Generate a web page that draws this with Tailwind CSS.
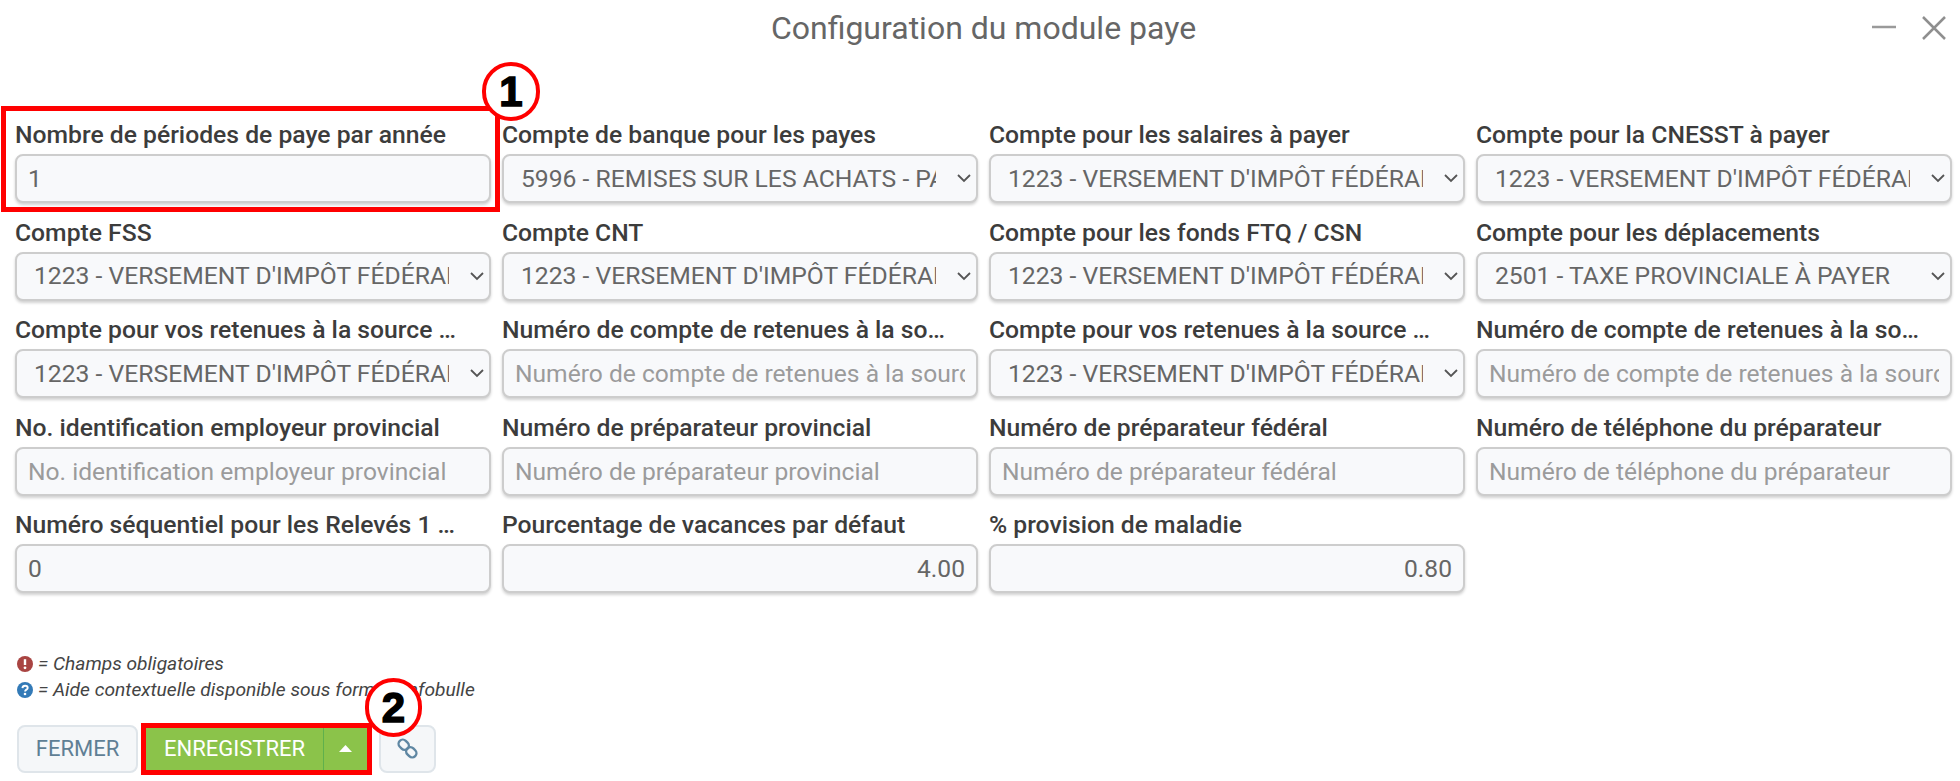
<!DOCTYPE html>
<html lang="fr">
<head>
    <meta charset="UTF-8">
    <title>Configuration du module paye</title>
    <script src="https://cdn.jsdelivr.net/npm/@tailwindcss/browser@4"></script>
</head>
<body class="bg-white font-['Roboto',sans-serif] text-[#3c3c3c]">
<div class="relative w-[1960px] h-[781px] overflow-hidden">
    <!-- header -->
    <div class="relative h-[56px] pl-[7px] flex justify-center items-center">
        <h1 class="text-[32px] text-[#666] leading-none">Configuration du module paye</h1>
        <svg class="absolute left-[1871px] top-[20px] w-[26px] h-[12px]" viewBox="0 0 26 12"><path d="M1 7H25" stroke="#9a9a9a" stroke-width="2.5"/></svg>
        <svg class="absolute left-[1921px] top-[15px] w-[26px] h-[26px]" viewBox="0 0 26 26"><path d="M2 2L24 24M24 2L2 24" stroke="#8f8f8f" stroke-width="2.5"/></svg>
    </div>

    <!-- fields -->
    <div class="grid grid-cols-[repeat(4,476px)] gap-x-[11px] auto-rows-[97.5px] pl-[15px] pt-[59px]">
        <div>
            <label class="block pr-[30px] text-[24.7px] font-medium leading-[39px] truncate">Nombre de périodes de paye par année</label>
            <input value="1" class="w-full h-[49px] px-[11px] text-[24.6px] text-[#666] bg-[#f8f9fb] border-2 border-[#cdcdcd] rounded-lg shadow-[0_2px_3px_rgba(0,0,0,0.18)]">
        </div>
        <div>
            <label class="block pr-[30px] text-[24.7px] font-medium leading-[39px] truncate">Compte de banque pour les payes</label>
            <div class="relative">
                <select class="w-full h-[49px] pl-[17px] pr-[40px] text-[24.7px] text-[#666] bg-[#f8f9fb] border-2 border-[#cdcdcd] rounded-lg shadow-[0_2px_3px_rgba(0,0,0,0.18)] appearance-none"><option>5996 - REMISES SUR LES ACHATS - PAIES</option></select>
                <svg class="absolute right-[6px] top-[19px] w-[16px] h-[10px]" viewBox="0 0 16 10"><path d="M2 2L8 8L14 2" fill="none" stroke="#555" stroke-width="1.8"/></svg>
            </div>
        </div>
        <div>
            <label class="block pr-[30px] text-[24.7px] font-medium leading-[39px] truncate">Compte pour les salaires à payer</label>
            <div class="relative">
                <select class="w-full h-[49px] pl-[17px] pr-[40px] text-[24.7px] text-[#666] bg-[#f8f9fb] border-2 border-[#cdcdcd] rounded-lg shadow-[0_2px_3px_rgba(0,0,0,0.18)] appearance-none"><option>1223 - VERSEMENT D'IMPÔT FÉDÉRAL À PAYER</option></select>
                <svg class="absolute right-[6px] top-[19px] w-[16px] h-[10px]" viewBox="0 0 16 10"><path d="M2 2L8 8L14 2" fill="none" stroke="#555" stroke-width="1.8"/></svg>
            </div>
        </div>
        <div>
            <label class="block pr-[30px] text-[24.7px] font-medium leading-[39px] truncate">Compte pour la CNESST à payer</label>
            <div class="relative">
                <select class="w-full h-[49px] pl-[17px] pr-[40px] text-[24.7px] text-[#666] bg-[#f8f9fb] border-2 border-[#cdcdcd] rounded-lg shadow-[0_2px_3px_rgba(0,0,0,0.18)] appearance-none"><option>1223 - VERSEMENT D'IMPÔT FÉDÉRAL À PAYER</option></select>
                <svg class="absolute right-[6px] top-[19px] w-[16px] h-[10px]" viewBox="0 0 16 10"><path d="M2 2L8 8L14 2" fill="none" stroke="#555" stroke-width="1.8"/></svg>
            </div>
        </div>

        <div>
            <label class="block pr-[30px] text-[24.7px] font-medium leading-[39px] truncate">Compte FSS</label>
            <div class="relative">
                <select class="w-full h-[49px] pl-[17px] pr-[40px] text-[24.7px] text-[#666] bg-[#f8f9fb] border-2 border-[#cdcdcd] rounded-lg shadow-[0_2px_3px_rgba(0,0,0,0.18)] appearance-none"><option>1223 - VERSEMENT D'IMPÔT FÉDÉRAL À PAYER</option></select>
                <svg class="absolute right-[6px] top-[19px] w-[16px] h-[10px]" viewBox="0 0 16 10"><path d="M2 2L8 8L14 2" fill="none" stroke="#555" stroke-width="1.8"/></svg>
            </div>
        </div>
        <div>
            <label class="block pr-[30px] text-[24.7px] font-medium leading-[39px] truncate">Compte CNT</label>
            <div class="relative">
                <select class="w-full h-[49px] pl-[17px] pr-[40px] text-[24.7px] text-[#666] bg-[#f8f9fb] border-2 border-[#cdcdcd] rounded-lg shadow-[0_2px_3px_rgba(0,0,0,0.18)] appearance-none"><option>1223 - VERSEMENT D'IMPÔT FÉDÉRAL À PAYER</option></select>
                <svg class="absolute right-[6px] top-[19px] w-[16px] h-[10px]" viewBox="0 0 16 10"><path d="M2 2L8 8L14 2" fill="none" stroke="#555" stroke-width="1.8"/></svg>
            </div>
        </div>
        <div>
            <label class="block pr-[30px] text-[24.7px] font-medium leading-[39px] truncate">Compte pour les fonds FTQ / CSN</label>
            <div class="relative">
                <select class="w-full h-[49px] pl-[17px] pr-[40px] text-[24.7px] text-[#666] bg-[#f8f9fb] border-2 border-[#cdcdcd] rounded-lg shadow-[0_2px_3px_rgba(0,0,0,0.18)] appearance-none"><option>1223 - VERSEMENT D'IMPÔT FÉDÉRAL À PAYER</option></select>
                <svg class="absolute right-[6px] top-[19px] w-[16px] h-[10px]" viewBox="0 0 16 10"><path d="M2 2L8 8L14 2" fill="none" stroke="#555" stroke-width="1.8"/></svg>
            </div>
        </div>
        <div>
            <label class="block pr-[30px] text-[24.7px] font-medium leading-[39px] truncate">Compte pour les déplacements</label>
            <div class="relative">
                <select class="w-full h-[49px] pl-[17px] pr-[40px] text-[24.7px] text-[#666] bg-[#f8f9fb] border-2 border-[#cdcdcd] rounded-lg shadow-[0_2px_3px_rgba(0,0,0,0.18)] appearance-none"><option>2501 - TAXE PROVINCIALE À PAYER</option></select>
                <svg class="absolute right-[6px] top-[19px] w-[16px] h-[10px]" viewBox="0 0 16 10"><path d="M2 2L8 8L14 2" fill="none" stroke="#555" stroke-width="1.8"/></svg>
            </div>
        </div>

        <div>
            <label class="block pr-[30px] text-[24.7px] font-medium leading-[39px] truncate">Compte pour vos retenues à la source provinciales</label>
            <div class="relative">
                <select class="w-full h-[49px] pl-[17px] pr-[40px] text-[24.7px] text-[#666] bg-[#f8f9fb] border-2 border-[#cdcdcd] rounded-lg shadow-[0_2px_3px_rgba(0,0,0,0.18)] appearance-none"><option>1223 - VERSEMENT D'IMPÔT FÉDÉRAL À PAYER</option></select>
                <svg class="absolute right-[6px] top-[19px] w-[16px] h-[10px]" viewBox="0 0 16 10"><path d="M2 2L8 8L14 2" fill="none" stroke="#555" stroke-width="1.8"/></svg>
            </div>
        </div>
        <div>
            <label class="block pr-[30px] text-[24.7px] font-medium leading-[39px] truncate">Numéro de compte de retenues à la source provincial</label>
            <input placeholder="Numéro de compte de retenues à la source provincial" class="w-full h-[49px] px-[11px] text-[24.6px] text-[#666] placeholder:text-[#9b9b9b] bg-[#f8f9fb] border-2 border-[#cdcdcd] rounded-lg shadow-[0_2px_3px_rgba(0,0,0,0.18)]">
        </div>
        <div>
            <label class="block pr-[30px] text-[24.7px] font-medium leading-[39px] truncate">Compte pour vos retenues à la source fédérales</label>
            <div class="relative">
                <select class="w-full h-[49px] pl-[17px] pr-[40px] text-[24.7px] text-[#666] bg-[#f8f9fb] border-2 border-[#cdcdcd] rounded-lg shadow-[0_2px_3px_rgba(0,0,0,0.18)] appearance-none"><option>1223 - VERSEMENT D'IMPÔT FÉDÉRAL À PAYER</option></select>
                <svg class="absolute right-[6px] top-[19px] w-[16px] h-[10px]" viewBox="0 0 16 10"><path d="M2 2L8 8L14 2" fill="none" stroke="#555" stroke-width="1.8"/></svg>
            </div>
        </div>
        <div>
            <label class="block pr-[30px] text-[24.7px] font-medium leading-[39px] truncate">Numéro de compte de retenues à la source fédéral</label>
            <input placeholder="Numéro de compte de retenues à la source fédéral" class="w-full h-[49px] px-[11px] text-[24.6px] text-[#666] placeholder:text-[#9b9b9b] bg-[#f8f9fb] border-2 border-[#cdcdcd] rounded-lg shadow-[0_2px_3px_rgba(0,0,0,0.18)]">
        </div>

        <div>
            <label class="block pr-[30px] text-[24.7px] font-medium leading-[39px] truncate">No. identification employeur provincial</label>
            <input placeholder="No. identification employeur provincial" class="w-full h-[49px] px-[11px] text-[24.6px] text-[#666] placeholder:text-[#9b9b9b] bg-[#f8f9fb] border-2 border-[#cdcdcd] rounded-lg shadow-[0_2px_3px_rgba(0,0,0,0.18)]">
        </div>
        <div>
            <label class="block pr-[30px] text-[24.7px] font-medium leading-[39px] truncate">Numéro de préparateur provincial</label>
            <input placeholder="Numéro de préparateur provincial" class="w-full h-[49px] px-[11px] text-[24.6px] text-[#666] placeholder:text-[#9b9b9b] bg-[#f8f9fb] border-2 border-[#cdcdcd] rounded-lg shadow-[0_2px_3px_rgba(0,0,0,0.18)]">
        </div>
        <div>
            <label class="block pr-[30px] text-[24.7px] font-medium leading-[39px] truncate">Numéro de préparateur fédéral</label>
            <input placeholder="Numéro de préparateur fédéral" class="w-full h-[49px] px-[11px] text-[24.6px] text-[#666] placeholder:text-[#9b9b9b] bg-[#f8f9fb] border-2 border-[#cdcdcd] rounded-lg shadow-[0_2px_3px_rgba(0,0,0,0.18)]">
        </div>
        <div>
            <label class="block pr-[30px] text-[24.7px] font-medium leading-[39px] truncate">Numéro de téléphone du préparateur</label>
            <input placeholder="Numéro de téléphone du préparateur" class="w-full h-[49px] px-[11px] text-[24.6px] text-[#666] placeholder:text-[#9b9b9b] bg-[#f8f9fb] border-2 border-[#cdcdcd] rounded-lg shadow-[0_2px_3px_rgba(0,0,0,0.18)]">
        </div>

        <div>
            <label class="block pr-[30px] text-[24.7px] font-medium leading-[39px] truncate">Numéro séquentiel pour les Relevés 1 de la paye</label>
            <input value="0" class="w-full h-[49px] px-[11px] text-[24.6px] text-[#666] bg-[#f8f9fb] border-2 border-[#cdcdcd] rounded-lg shadow-[0_2px_3px_rgba(0,0,0,0.18)]">
        </div>
        <div>
            <label class="block pr-[30px] text-[24.7px] font-medium leading-[39px] truncate">Pourcentage de vacances par défaut</label>
            <input value="4.00" class="w-full h-[49px] px-[11px] text-right text-[24.6px] text-[#666] bg-[#f8f9fb] border-2 border-[#cdcdcd] rounded-lg shadow-[0_2px_3px_rgba(0,0,0,0.18)]">
        </div>
        <div>
            <label class="block pr-[30px] text-[24.7px] font-medium leading-[39px] truncate">% provision de maladie</label>
            <input value="0.80" class="w-full h-[49px] px-[11px] text-right text-[24.6px] text-[#666] bg-[#f8f9fb] border-2 border-[#cdcdcd] rounded-lg shadow-[0_2px_3px_rgba(0,0,0,0.18)]">
        </div>
    </div>

    <!-- legend -->
    <div class="pl-[17px] mt-[48px] text-[19.2px] italic leading-[26px] text-[#444]">
        <div class="flex items-center gap-[5px]">
            <svg class="w-[16px] h-[16px]" viewBox="0 0 16 16"><circle cx="8" cy="8" r="8" fill="#a94442"/><path d="M8 3.2V9" stroke="#fff" stroke-width="2.4"/><circle cx="8" cy="11.8" r="1.4" fill="#fff"/></svg>
            <span>= Champs obligatoires</span>
        </div>
        <div class="flex items-center gap-[5px]">
            <svg class="w-[16px] h-[16px]" viewBox="0 0 16 16"><circle cx="8" cy="8" r="8" fill="#337ab7"/><path d="M5.4 6.1C5.6 4.5 6.7 3.7 8.1 3.7C9.6 3.7 10.7 4.6 10.7 5.9C10.7 7.6 8.1 7.7 8.1 9.4" fill="none" stroke="#fff" stroke-width="1.9"/><circle cx="8" cy="12" r="1.3" fill="#fff"/></svg>
            <span>= Aide contextuelle disponible sous forme d'infobulle</span>
        </div>
    </div>

    <!-- buttons -->
    <div class="flex items-center pl-[17px] mt-[22px]">
        <button class="w-[121px] h-[48px] text-[22px] text-[#5f7f95] bg-[#f5f7f9] border-2 border-[#dfe5ea] rounded-lg">FERMER</button>
        <div class="flex h-[44px] ml-[8px] bg-[#8bc34a] text-white text-[22px]">
            <button class="w-[178px] border-r border-[#5fb04c]">ENREGISTRER</button>
            <button class="w-[43px] flex items-center justify-center">
                <svg class="w-[13px] h-[7px]" viewBox="0 0 13 7"><path d="M6.5 0L13 7H0Z" fill="#fff"/></svg>
            </button>
        </div>
        <button class="w-[57px] h-[48px] ml-[12px] flex items-center justify-center bg-[#f5f7f9] border-2 border-[#dfe5ea] rounded-lg">
            <svg class="w-[21px] h-[21px]" viewBox="0 0 21 21" fill="none" stroke="#5f87a3" stroke-width="2.4"><rect x="1.2" y="2.5" width="11" height="8.4" rx="4.2" transform="rotate(45 6.7 6.7)"/><rect x="8.8" y="10.1" width="11" height="8.4" rx="4.2" transform="rotate(45 14.3 14.3)"/></svg>
        </button>
    </div>

    <!-- annotations -->
    <div class="absolute left-[1px] top-[106px] w-[499px] h-[106px] border-[5px] border-[#ff0000]"></div>
    <div class="absolute left-[482px] top-[62px] w-[58px] h-[59px] rounded-full bg-white border-[4px] border-[#ff0000] flex items-center justify-center text-[42px] font-bold text-black [-webkit-text-stroke:1.5px_black] font-['Liberation_Sans',sans-serif] leading-none">1</div>
    <div class="absolute left-[141px] top-[723px] w-[231px] h-[52px] border-[5px] border-[#ff0000]"></div>
    <div class="absolute left-[365px] top-[678px] w-[57px] h-[59px] rounded-full bg-white border-[4px] border-[#ff0000] flex items-center justify-center text-[42px] font-bold text-black [-webkit-text-stroke:1.5px_black] font-['Liberation_Sans',sans-serif] leading-none">2</div>
</div>
</body>
</html>
